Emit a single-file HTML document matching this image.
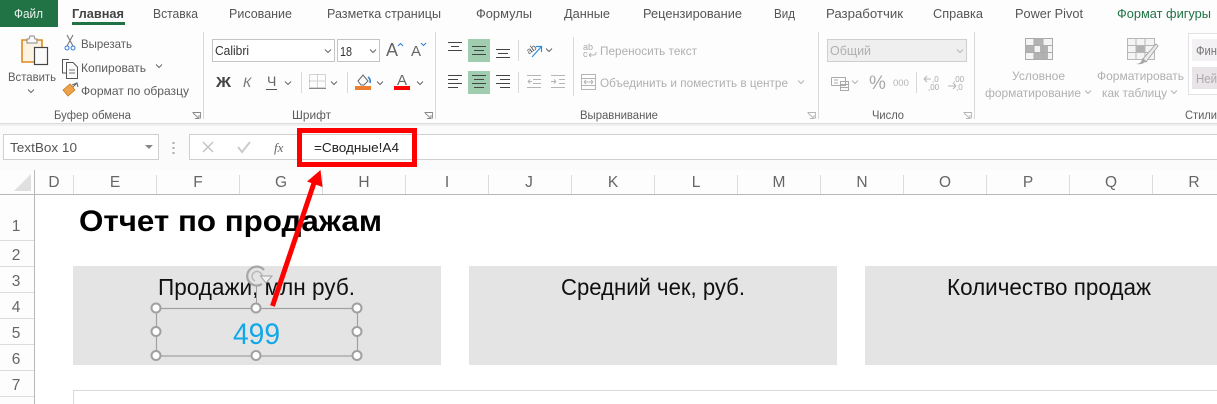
<!DOCTYPE html>
<html lang="ru"><head><meta charset="utf-8"><title>Excel</title>
<style>
html,body{margin:0;padding:0;background:#fff;width:1217px;height:404px;overflow:hidden}
svg{display:block;position:absolute;left:0;top:0}
text{font-family:"Liberation Sans",sans-serif;font-size:12px;fill:#555;white-space:pre}
.g{fill:#b0b0b0}
.l{fill:#5c5c5c}
.h{font-size:15.500px;fill:#666}
.c{font-size:23px;fill:#111}
.t{font-size:12.500px;fill:#555}
</style></head><body>
<svg width="1217" height="404" viewBox="0 0 1217 404" xmlns="http://www.w3.org/2000/svg">
<defs>
<path id="cv" d="M-3-1.500L0 1.500L3-1.500" fill="none" stroke="#666" stroke-width="1"/>
<path id="cg" d="M-3-1.500L0 1.500L3-1.500" fill="none" stroke="#b5b5b5" stroke-width="1"/>
</defs>
<rect width="1217" height="404" fill="#fff"/>
<!-- ribbon -->
<rect width="1217" height="123" fill="#fdfdfd"/>
<rect y="123" width="1217" height="1" fill="#dcdcdc"/>
<rect y="124" width="1217" height="2" fill="#f0f0f0"/>
<rect y="126" width="1217" height="44" fill="#fbfbfb"/>
<rect width="58" height="27" fill="#217346"/>
<text x="14" y="18" textLength="29" lengthAdjust="spacingAndGlyphs" style="fill:#e8f2ec;font-size:12.500px">Файл</text>
<text x="72" y="18" textLength="52" lengthAdjust="spacingAndGlyphs" style="font-weight:bold;font-size:12.500px;fill:#444">Главная</text>
<rect x="72" y="22" width="53" height="3" fill="#217346"/>
<text x="153" y="18" textLength="45" lengthAdjust="spacingAndGlyphs" class="t">Вставка</text>
<text x="229" y="18" textLength="63" lengthAdjust="spacingAndGlyphs" class="t">Рисование</text>
<text x="327" y="18" textLength="114" lengthAdjust="spacingAndGlyphs" class="t">Разметка страницы</text>
<text x="476" y="18" textLength="56" lengthAdjust="spacingAndGlyphs" class="t">Формулы</text>
<text x="564" y="18" textLength="46" lengthAdjust="spacingAndGlyphs" class="t">Данные</text>
<text x="643" y="18" textLength="99" lengthAdjust="spacingAndGlyphs" class="t">Рецензирование</text>
<text x="774" y="18" textLength="21" lengthAdjust="spacingAndGlyphs" class="t">Вид</text>
<text x="826" y="18" textLength="77" lengthAdjust="spacingAndGlyphs" class="t">Разработчик</text>
<text x="933" y="18" textLength="50" lengthAdjust="spacingAndGlyphs" class="t">Справка</text>
<text x="1015" y="18" textLength="68" lengthAdjust="spacingAndGlyphs" class="t">Power Pivot</text>
<text x="1117" y="18" textLength="94" lengthAdjust="spacingAndGlyphs" class="t" style="fill:#217346">Формат фигуры</text>
<!-- group separators -->
<g fill="#d8d8d8">
<rect x="203" y="32" width="1" height="87"/><rect x="435" y="32" width="1" height="87"/>
<rect x="818" y="32" width="1" height="87"/><rect x="974" y="32" width="1" height="87"/>
<rect x="518" y="40" width="1" height="21"/><rect x="518" y="72" width="1" height="21"/>
<rect x="573" y="37" width="1" height="59"/><rect x="301" y="72" width="1" height="21"/>
<rect x="347" y="72" width="1" height="21"/><rect x="916" y="72" width="1" height="21"/>
</g>
<!-- paste icon -->
<path d="M22 40H42V62H22Z" fill="#fdf3e3" stroke="#e08a1e" stroke-width="1.600"/>
<path d="M27 39H29L30 36H34L35 39H37V43H27Z" fill="#fafafa" stroke="#888"/>
<rect x="34.500" y="47.500" width="13" height="17" fill="#fafafa" stroke="#444" stroke-width="1.200"/>
<text x="8" y="81" textLength="48" lengthAdjust="spacingAndGlyphs" class="l">Вставить</text>
<use href="#cv" x="31" y="91"/>
<!-- scissors -->
<path d="M67 35L73 46M73 35L67 46" stroke="#777" stroke-width="1.100" fill="none"/>
<circle cx="67" cy="48" r="2" fill="none" stroke="#2b7cd3"/><circle cx="73" cy="48" r="2" fill="none" stroke="#2b7cd3"/>
<text x="81" y="48" textLength="51" lengthAdjust="spacingAndGlyphs" class="l">Вырезать</text>
<!-- copy -->
<path d="M66 73H62.500V59.500H69" fill="none" stroke="#555"/><path d="M66.500 62.500H73L77.500 67V78.500H66.500Z" fill="#fafafa" stroke="#555"/><path d="M69 70H75M69 73H75" stroke="#777"/>
<text x="81" y="72" textLength="65" lengthAdjust="spacingAndGlyphs" class="l">Копировать</text>
<use href="#cv" x="159" y="66"/>
<!-- brush -->
<path d="M63 90L70 84L75 90L68 96Z" fill="#eda34a" stroke="#c97d22" stroke-width=".8"/>
<path d="M72 85L77 83L78 87M73 87L77 83" stroke="#666" fill="none" stroke-width="1.100"/>
<text x="81" y="95" textLength="108" lengthAdjust="spacingAndGlyphs" class="l">Формат по образцу</text>
<text x="54" y="119" textLength="77" lengthAdjust="spacingAndGlyphs" class="l" style="font-size:11.500px">Буфер обмена</text>
<path d="M192.500 112.500H200.500V118.500M193 113L199 118.500M199 115V118.500H195" fill="none" stroke="#888" stroke-width=".9"/>
<!-- font -->
<rect x="212.500" y="39.500" width="122" height="22" fill="#fff" stroke="#c4c4c4"/>
<text x="215" y="55" textLength="34" lengthAdjust="spacingAndGlyphs" style="fill:#333;font-size:12.500px">Calibri</text>
<use href="#cv" x="328" y="51"/>
<rect x="337.500" y="39.500" width="42" height="22" fill="#fff" stroke="#c4c4c4"/>
<text x="340" y="56" textLength="12" lengthAdjust="spacingAndGlyphs" style="fill:#333;font-size:13px">18</text>
<use href="#cv" x="373" y="51"/>
<text x="386" y="56" style="font-size:18px;fill:#666">A</text>
<path d="M398 46L400.500 43.500L403 46" fill="none" stroke="#2b7cd3"/>
<text x="411" y="56" style="font-size:15px;fill:#666">A</text>
<path d="M421 43L423.500 45.500L426 43" fill="none" stroke="#2b7cd3"/>
<text x="216" y="87" textLength="15" lengthAdjust="spacingAndGlyphs" style="font-weight:bold;font-size:15px;fill:#444">Ж</text>
<text x="243" y="87" style="font-style:italic;font-size:14px;fill:#777">К</text>
<text x="267" y="86" style="font-size:14px;fill:#666">Ч</text>
<rect x="266" y="89" width="11" height="1" fill="#555"/>
<use href="#cv" x="288" y="83"/>
<path d="M309.500 74.500H325.500V87.500H309.500ZM317.500 74.500V87.500M309.500 81H325.500" fill="none" stroke="#aaa" stroke-dasharray="1 1"/>
<rect x="309" y="88" width="17" height="1" fill="#888"/>
<use href="#cv" x="334" y="83"/>
<path d="M358 81L363 75L368 81L364 85H361Z" fill="#fafafa" stroke="#666"/>
<path d="M368 77Q371 79 370 83" fill="none" stroke="#2b7cd3" stroke-width="1.600"/>
<rect x="355" y="86" width="16" height="4" fill="#ed7d31"/>
<use href="#cv" x="380" y="83"/>
<text x="397" y="85" style="font-size:15px;fill:#666">A</text>
<rect x="394" y="86" width="16" height="4" fill="#ff0000"/>
<use href="#cv" x="420" y="83"/>
<text x="292" y="119" textLength="39" lengthAdjust="spacingAndGlyphs" class="l" style="font-size:11.500px">Шрифт</text>
<path d="M424.500 112.500H432.500V118.500M425 113L431 118.500M431 115V118.500H427" fill="none" stroke="#888" stroke-width=".9"/>
<!-- alignment -->
<rect x="468" y="39" width="22" height="23" fill="#a0cdb0"/>
<rect x="468" y="71" width="22" height="23" fill="#a0cdb0"/>
<path d="M448 42.500H462M451 46.500H459M448 50.500H462" stroke="#444" fill="none"/>
<path d="M472 46.500H486M474 50.500H484M472 54.500H486" stroke="#444" fill="none"/>
<path d="M496 49.500H510M498 53.500H508M496 57.500H510" stroke="#444" fill="none"/>
<path d="M448 75.500H462M448 79.500H458M448 83.500H462M448 87.500H458" stroke="#444" fill="none"/>
<path d="M472 75.500H486M474 79.500H484M472 83.500H486M474 87.500H484" stroke="#444" fill="none"/>
<path d="M496 75.500H510M500 79.500H510M496 83.500H510M500 87.500H510" stroke="#444" fill="none"/>
<text x="527" y="52" transform="rotate(-35 532 50)" style="font-size:9px;fill:#555">ab</text>
<path d="M532 57L541 47M536 46.500H541.500V52" stroke="#2b8fdc" stroke-width="1.200" fill="none"/>
<use href="#cv" x="549" y="50"/>
<g stroke="#b5b5b5" fill="none"><path d="M527 75.500H541M533 79.500H541M533 83.500H541M527 87.500H541M528 81.500H532M528 81.500L530 79.500M528 81.500L530 83.500"/>
<path d="M551 75.500H565M559 79.500H565M559 83.500H565M551 87.500H565M551 81.500H556M556 81.500L554 79.500M556 81.500L554 83.500"/></g>
<text x="583" y="50" style="font-size:9px;fill:#aaa">ab</text><text x="583" y="57" style="font-size:9px;fill:#aaa">c</text>
<path d="M589 55H594Q596 55 596 52M589 55L591 53M589 55L591 57" stroke="#b5b5b5" fill="none"/>
<text x="600" y="55" textLength="97" lengthAdjust="spacingAndGlyphs" class="g">Переносить текст</text>
<path d="M581.500 74.500H595.500V89.500H581.500ZM581.500 78.500H595.500M581.500 85.500H595.500M584 82H593M584 82L586 80M584 82L586 84M593 82L591 80M593 82L591 84" fill="none" stroke="#b5b5b5"/>
<text x="600" y="87" textLength="188" lengthAdjust="spacingAndGlyphs" class="g">Объединить и поместить в центре</text>
<use href="#cg" x="801" y="82"/>
<text x="580" y="119" textLength="78" lengthAdjust="spacingAndGlyphs" class="l" style="font-size:11.500px">Выравнивание</text>
<path d="M807.500 112.500H815.500V118.500M808 113L814 118.500M814 115V118.500H810" fill="none" stroke="#b5b5b5" stroke-width=".9"/>
<!-- number -->
<rect x="827.500" y="39.500" width="139" height="22" fill="#efefef" stroke="#cfcfcf"/>
<text x="830" y="55" textLength="41" lengthAdjust="spacingAndGlyphs" class="g" style="font-size:12.500px">Общий</text>
<use href="#cg" x="960" y="51"/>
<path d="M831.500 77.500H845.500V85.500H831.500M831.500 77.500V85.500M834 80H838M834 83H838" fill="none" stroke="#aaa"/>
<path d="M840.500 81.500H848.500V90.500H840.500ZM840.500 84.500H848.500M840.500 87.500H848.500" fill="none" stroke="#aaa"/>
<use href="#cg" x="855" y="82"/>
<text x="869" y="89" style="font-size:19px;fill:#a8a8a8">%</text>
<text x="893" y="86" style="font-size:9.500px;fill:#b5b5b5">000</text>
<text x="932" y="82" style="font-size:8px;fill:#a8a8a8">,0</text><text x="928" y="90" style="font-size:8px;fill:#a8a8a8">,00</text>
<path d="M924 79H931M924 79L927 76M924 79L927 82" stroke="#b5b5b5" fill="none"/>
<text x="953" y="82" style="font-size:8px;fill:#a8a8a8">,00</text><text x="956" y="90" style="font-size:8px;fill:#a8a8a8">,0</text>
<path d="M948 86H956M956 86L953 83M956 86L953 89" stroke="#b5b5b5" fill="none"/>
<text x="872" y="119" textLength="32" lengthAdjust="spacingAndGlyphs" class="l" style="font-size:11.500px">Число</text>
<path d="M963.500 112.500H971.500V118.500M964 113L970 118.500M970 115V118.500H966" fill="none" stroke="#b5b5b5" stroke-width=".9"/>
<!-- styles -->
<rect x="1026" y="39" width="27" height="20" fill="#f4f4f4"/>
<path d="M1026 39H1044V45H1040V52H1047V59H1033V52H1026Z" fill="#b4b4b4" opacity=".0"/>
<path d="M1034 39H1043V45.500H1048V52H1040V45.500H1034ZM1026 45.500H1034V52H1026ZM1034 52H1048V59H1034Z" fill="#b2b2b2"/>
<path d="M1025.500 38.500H1052.500V59.500H1025.500ZM1034 38.500V59.500M1043 38.500V59.500M1025.500 45.500H1052.500M1025.500 52.500H1052.500" fill="none" stroke="#ababab"/>
<text x="1012" y="80" textLength="53" lengthAdjust="spacingAndGlyphs" class="g">Условное</text>
<text x="985" y="97" textLength="96" lengthAdjust="spacingAndGlyphs" class="g">форматирование</text>
<use href="#cg" x="1088" y="92"/>
<rect x="1127" y="38" width="27" height="22" fill="#f4f4f4"/>
<rect x="1136" y="45" width="9" height="8" fill="#b2b2b2"/>
<path d="M1127.500 38.500H1154.500V59.500H1127.500ZM1136 38.500V59.500M1145 38.500V59.500M1127.500 45.500H1154.500M1127.500 52.500H1154.500" fill="none" stroke="#b8b8b8"/>
<path d="M1142 60L1156 44L1158 46L1146 62Z" fill="#ececec" stroke="#aaa"/>
<path d="M1136 64Q1141 64 1143 58L1146 61Q1143 65 1136 64Z" fill="#a8a8a8"/>
<text x="1097" y="80" textLength="87" lengthAdjust="spacingAndGlyphs" class="g">Форматировать</text>
<text x="1102" y="97" textLength="65" lengthAdjust="spacingAndGlyphs" class="g">как таблицу</text>
<use href="#cg" x="1174" y="92"/>
<rect x="1188.500" y="33.500" width="40" height="61" fill="#fff" stroke="#e2e2e2"/>
<rect x="1192" y="39" width="25" height="22" fill="#f3f1f3"/>
<rect x="1192" y="67" width="25" height="22" fill="#e8e4e8"/>
<text x="1196" y="55" textLength="21" lengthAdjust="spacingAndGlyphs" style="font-size:13px;fill:#777">Фин</text>
<text x="1196" y="83" textLength="21" lengthAdjust="spacingAndGlyphs" style="font-size:13px;fill:#aaa">Ней</text>
<text x="1185" y="119" textLength="32" lengthAdjust="spacingAndGlyphs" class="l" style="font-size:11.500px">Стили</text>
<!-- formula bar -->
<rect x="3.500" y="134.500" width="155" height="25" fill="#fff" stroke="#cfcfcf"/>
<text x="10" y="152" textLength="67" lengthAdjust="spacingAndGlyphs" style="font-size:13px;fill:#555">TextBox 10</text>
<path d="M145 145H153L149 149Z" fill="#888"/>
<g fill="#aaa"><rect x="172.500" y="142" width="2" height="2"/><rect x="172.500" y="147" width="2" height="2"/><rect x="172.500" y="152" width="2" height="2"/></g>
<rect x="189.500" y="134.500" width="1028" height="25" fill="#fff" stroke="#cfcfcf"/>
<path d="M203 142L213 152M213 142L203 152" stroke="#c4c4c4" stroke-width="1.500" fill="none"/>
<path d="M238 147L242 152L250 142" stroke="#cbcbcb" stroke-width="2" fill="none"/>
<text x="274" y="152" style="font-family:'Liberation Serif',serif;font-style:italic;font-size:13px;fill:#666">fx</text>
<text x="314" y="152" textLength="85" lengthAdjust="spacingAndGlyphs" style="font-size:13px;fill:#222">=Сводные!A4</text>
<!-- grid headers -->
<rect y="170" width="1217" height="24" fill="#fdfdfd"/>
<rect y="194" width="34" height="210" fill="#fdfdfd"/>
<path d="M14 191L31 174V191Z" fill="#e0e0e0"/>
<rect x="0" y="194" width="1217" height="1" fill="#b8b8b8"/>
<rect x="34" y="170" width="1" height="234" fill="#b8b8b8"/>
<g fill="#dcdcdc">
<rect x="73" y="175" width="1" height="19"/><rect x="156" y="175" width="1" height="19"/><rect x="239" y="175" width="1" height="19"/><rect x="322" y="175" width="1" height="19"/><rect x="405" y="175" width="1" height="19"/><rect x="488" y="175" width="1" height="19"/><rect x="571" y="175" width="1" height="19"/><rect x="654" y="175" width="1" height="19"/><rect x="737" y="175" width="1" height="19"/><rect x="820" y="175" width="1" height="19"/><rect x="903" y="175" width="1" height="19"/><rect x="986" y="175" width="1" height="19"/><rect x="1069" y="175" width="1" height="19"/><rect x="1152" y="175" width="1" height="19"/>
<rect x="0" y="240" width="34" height="1"/><rect x="0" y="266" width="34" height="1"/><rect x="0" y="292" width="34" height="1"/><rect x="0" y="318" width="34" height="1"/><rect x="0" y="344" width="34" height="1"/><rect x="0" y="370" width="34" height="1"/><rect x="0" y="396" width="34" height="1"/>
</g>
<g text-anchor="middle">
<text x="54" y="187" class="h">D</text><text x="115" y="187" class="h">E</text><text x="198" y="187" class="h">F</text><text x="281" y="187" class="h">G</text><text x="364" y="187" class="h">H</text><text x="447" y="187" class="h">I</text><text x="529" y="187" class="h">J</text><text x="613" y="187" class="h">K</text><text x="696" y="187" class="h">L</text><text x="779" y="187" class="h">M</text><text x="862" y="187" class="h">N</text><text x="945" y="187" class="h">O</text><text x="1028" y="187" class="h">P</text><text x="1111" y="187" class="h">Q</text><text x="1194" y="187" class="h">R</text>
<text x="16" y="231" class="h">1</text><text x="16" y="260" class="h">2</text><text x="16" y="286" class="h">3</text><text x="16" y="312" class="h">4</text><text x="16" y="338" class="h">5</text><text x="16" y="364" class="h">6</text><text x="16" y="390" class="h">7</text>
</g>
<!-- sheet content -->
<text x="79" y="231" textLength="303" lengthAdjust="spacingAndGlyphs" style="font-weight:bold;font-size:30px;fill:#000">Отчет по продажам</text>
<rect x="73" y="266" width="368" height="99" fill="#e4e4e4"/>
<rect x="469" y="266" width="368" height="99" fill="#e4e4e4"/>
<rect x="865" y="266" width="352" height="99" fill="#e4e4e4"/>
<text x="158" y="295" textLength="197" lengthAdjust="spacingAndGlyphs" class="c">Продажи, млн руб.</text>
<text x="561" y="295" textLength="184" lengthAdjust="spacingAndGlyphs" class="c">Средний чек, руб.</text>
<text x="947" y="295" textLength="204" lengthAdjust="spacingAndGlyphs" class="c">Количество продаж</text>
<path d="M73.500 404V390.500H1217" fill="#fff" stroke="#d9d9d9"/>
<!-- text box selection -->
<rect x="156.500" y="308.500" width="201" height="47.500" fill="none" stroke="#a0a0a0" stroke-width="1.200"/>
<path d="M256.500 286V304" stroke="#a0a0a0"/>
<text x="233" y="344" textLength="47" lengthAdjust="spacingAndGlyphs" style="font-size:30px;fill:#11a8e8">499</text>
<!-- rotate handle -->
<path d="M264 270A9.500 9.500 0 1 0 262 284" fill="none" stroke="#a6a6a6" stroke-width="2.200"/>
<path d="M262 277A5 5 0 1 0 255 281" fill="none" stroke="#b8b8b8" stroke-width="1.500"/>
<path d="M260.500 276H272L266 283Z" fill="#f2f2f2" stroke="#a0a0a0"/>
<g fill="#fff" stroke="#a0a0a0" stroke-width="2">
<circle cx="156" cy="308" r="4.500"/><circle cx="256" cy="308" r="4.500"/><circle cx="357" cy="308" r="4.500"/>
<circle cx="156" cy="331.500" r="4.500"/><circle cx="357" cy="331.500" r="4.500"/>
<circle cx="156" cy="355.500" r="4.500"/><circle cx="256" cy="355.500" r="4.500"/><circle cx="357" cy="355.500" r="4.500"/>
</g>
<!-- red annotations -->
<rect x="299.500" y="130.500" width="115" height="34" fill="none" stroke="#ff0000" stroke-width="5"/>
<path d="M272.500 306L314 183" stroke="#ff0000" stroke-width="5" fill="none"/>
<path d="M320.500 170L322.500 187L307 181.500Z" fill="#ff0000"/>
</svg>
</body></html>
